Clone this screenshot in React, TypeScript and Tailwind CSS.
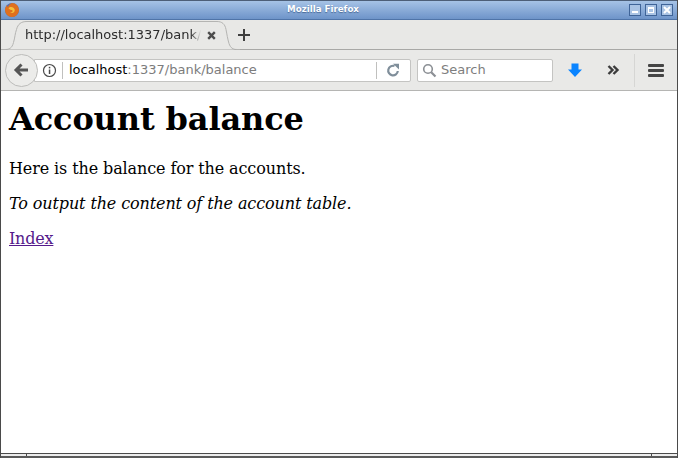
export default function App() {
  const ui = "font-['DejaVu_Sans',sans-serif]";
  return (
    <div className={`w-[678px] h-[458px] flex flex-col overflow-hidden bg-white border-x border-[#4a4a4a] ${ui}`}>
      {/* Title bar */}
      <div className="h-[20px] shrink-0 flex items-center bg-gradient-to-b from-[#a6c3e6] to-[#6e94c9] border-t border-t-[#4d5f78] border-b border-b-[#4f74a8] -mx-px">
        <svg width="16" height="16" viewBox="0 0 16 16" className="ml-[4px] shrink-0">
          <circle cx="8" cy="8" r="7" fill="#5a6ea8" />
          <path d="M8 1a7 7 0 1 1-6.800 5.400c.4-1.700 1.100-2.800 1.800-3.500 0 1.100.3 1.700.9 2C5 3 6.400 1.500 8 1z" fill="#e0701e" />
          <path d="M4.500 6.500c1-1.400 3.200-1.900 4.900-.7 1.500 1 1.800 2.900.7 4.200-.9 1.100-2.900 1.300-4 .2 1.100.3 2.200-.1 2.500-1 .2-.9-.7-1.400-1.800-1.300z" fill="#f3c13c" />
        </svg>
        <div className="flex-1 text-center text-[8.700px] font-bold text-white [text-shadow:0_1px_1px_#4a6a98] pr-[3px]">Mozilla Firefox</div>
        <div className="flex gap-[4px] mr-[5px] mb-[1px]">
          <div className="w-[12px] h-[12px] border border-[#3f6498] bg-[#a9c3e4] flex items-end justify-center pb-[2px]">
            <div className="w-[6px] h-[2px] bg-white" />
          </div>
          <div className="w-[12px] h-[12px] border border-[#3f6498] bg-[#a9c3e4] flex items-center justify-center">
            <div className="w-[6px] h-[6px] border border-white border-t-2" />
          </div>
          <div className="w-[12px] h-[12px] border border-[#3f6498] bg-[#a9c3e4] flex items-center justify-center">
            <svg width="8" height="8" viewBox="0 0 8 8"><path d="M1 1l6 6M7 1L1 7" stroke="#fff" strokeWidth="2" /></svg>
          </div>
        </div>
      </div>

      {/* Tab strip */}
      <div className="h-[30px] shrink-0 flex items-stretch bg-[#e8e8e6] border-b border-[#a8a8a6] relative">
        <div className="relative w-[236px] h-[30px] shrink-0 flex items-center">
          <svg width="239" height="30" viewBox="0 0 239 30" className="absolute left-0 top-0">
            <path d="M0 29.500h4c4 0 7-1 8.500-7 1.500-5 1.500-9 3-13C17 4 20 1.500 26 1.500h190c5 0 8 2.500 9 8 1 5 1.500 9 3 14 1.500 4.500 4 6 8 6h3" fill="#e8e8e6" stroke="#b4b4b2" />
          </svg>
          <span className="relative ml-[24px] w-[176px] overflow-hidden whitespace-nowrap text-[13px] text-[#2c2c2c] [mask-image:linear-gradient(to_right,black_166px,transparent_176px)]">http://localhost:1337/bank/balance</span>
          <svg width="9" height="9" viewBox="0 0 9 9" className="relative ml-[5.500px]"><path d="M1.200 1.200l6.600 6.600M7.800 1.200L1.200 7.800" stroke="#4c4c4c" strokeWidth="2.400" /></svg>
        </div>
        <svg width="14" height="14" viewBox="0 0 14 14" className="self-center ml-[0px] mt-[1px]"><path d="M7 1v12M1 7h12" stroke="#3f3f3f" strokeWidth="2" /></svg>
      </div>

      {/* Toolbar */}
      <div className="h-[41px] shrink-0 flex items-center bg-[#e9e9e7] border-b border-[#b5b5b3] relative">
        <div className="flex-1 flex items-center relative pl-[4px]">
          <div className="w-[33px] h-[33px] rounded-full bg-[#ececea] border border-[#bcbcba] flex items-center justify-center relative z-10 shrink-0">
            <svg width="16" height="16" viewBox="0 0 16 16" className="-ml-[2px]"><path d="M8.500 2.500L3 8l5.500 5.500M3.500 8H15" fill="none" stroke="#565656" strokeWidth="3" /></svg>
          </div>
          <div className="w-[377px] h-[23px] -ml-[4px] bg-white border border-[#c4c4c2] rounded-r-[2px] flex items-center shrink-0">
            <svg width="15" height="15" viewBox="0 0 15 15" className="ml-[7px] shrink-0">
              <circle cx="7.500" cy="7.500" r="6" fill="none" stroke="#4a4a4a" strokeWidth="1.200" />
              <rect x="6.800" y="6.500" width="1.500" height="4.500" fill="#4a4a4a" />
              <rect x="6.800" y="3.800" width="1.500" height="1.600" fill="#4a4a4a" />
            </svg>
            <div className="w-px h-[17px] bg-[#c0c0be] ml-[5px] shrink-0" />
            <div className="ml-[6px] text-[13px] whitespace-nowrap flex-1 text-[#7c7c7c]"><span className="text-black">localhost</span>:1337/bank/balance</div>
            <div className="w-px h-[17px] bg-[#c0c0be] shrink-0" />
            <svg width="14" height="14" viewBox="0 0 14 14" className="ml-[9px] mr-[10px] shrink-0">
              <path d="M11.800 8A4.800 4.800 0 1 1 8.500 3" fill="none" stroke="#7f8e9a" strokeWidth="2.200" />
              <path d="M7 .8h6v5.800z" fill="#7f8e9a" />
            </svg>
          </div>
          <div className="w-[136px] h-[23px] ml-[6px] bg-white border border-[#c4c4c2] rounded-[2px] flex items-center shrink-0">
            <svg width="15" height="15" viewBox="0 0 15 15" className="ml-[4px] shrink-0">
              <circle cx="6" cy="6" r="4.300" fill="none" stroke="#8b8f94" strokeWidth="1.600" />
              <path d="M9.200 9.200l4.300 4.300" stroke="#8b8f94" strokeWidth="2.200" />
            </svg>
            <span className="ml-[4px] text-[13px] text-[#7e7e7e]">Search</span>
          </div>
          <svg width="16" height="16" viewBox="0 0 16 16" className="ml-[14px] shrink-0">
            <path d="M4.500 1.500h7v6h3.500L8 15 1 7.500h3.500z" fill="#0a84ff" />
          </svg>
          <svg width="14" height="12" viewBox="0 0 14 12" className="ml-[24px] shrink-0">
            <path d="M1.500 2L5.500 6l-4 4M6.500 2l4 4-4 4" fill="none" stroke="#3c3c3c" strokeWidth="2.400" />
          </svg>
          <div className="w-px h-[33px] bg-[#d6d6d4] ml-[13px] shrink-0" />
          <div className="ml-[13px] flex flex-col gap-[2px] shrink-0">
            <div className="w-[16px] h-[3px] rounded-[1px] bg-[#454545]" />
            <div className="w-[16px] h-[3px] rounded-[1px] bg-[#454545]" />
            <div className="w-[16px] h-[3px] rounded-[1px] bg-[#454545]" />
          </div>
        </div>
      </div>

      {/* Page */}
      <div className="flex-1 min-h-0 bg-white px-[8px] font-['DejaVu_Serif',serif] text-[16px] text-black">
        <h1 className="text-[32px] font-bold leading-[37px] mt-[10px] tracking-[-0.130px]">Account balance</h1>
        <p className="mt-[21px] leading-[19px] tracking-[-0.110px]">Here is the balance for the accounts.</p>
        <p className="mt-[16px] leading-[19px] italic tracking-[-0.120px]">To output the content of the account table.</p>
        <p className="mt-[16px] leading-[19px] tracking-[-0.200px]"><a href="#" className="underline text-[#551a8b]">Index</a></p>
      </div>

      {/* Bottom frame */}
      <div className="h-[5px] shrink-0 border-t border-[#4a4a4a] border-b-2 border-b-[#5a5a5a] bg-[#ececec] -mx-px flex justify-between">
        <div className="w-[27px] border-x border-[#4a4a4a]" />
        <div className="w-[27px] border-x border-[#4a4a4a]" />
      </div>
    </div>
  );
}
